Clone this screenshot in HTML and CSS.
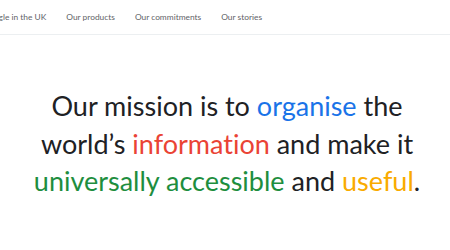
FILE: index.html
```html
<!DOCTYPE html>
<html lang="en">
<head>
    <meta charset="UTF-8">
    <meta name="viewport" content="width=device-width, initial-scale=1.0">
    <title>About Google</title>
    <link rel="stylesheet" href="styles.css">
</head>
<body>
    <!-- Top navigation -->
    <div class="nav">
        <ul class="nav-list">
            <li>Google in the UK</li>
            <li>Our products</li>
            <li>Our commitments</li>
            <li>Our stories</li>
        </ul>
    </div>

    <!-- Mission statement -->
    <div class="mission">
        <h1>Our mission is to <span class="blue">organise</span> the<br>world’s <span class="red">information</span> and make it<br><span class="green">universally accessible</span> and <span class="yellow">useful</span>.</h1>
    </div>
</body>
</html>
```

FILE: styles.css
```css
body {
    margin: 0;
    padding: 0;
    background-color: #fff;
    font-family: Lato, Roboto, sans-serif;
    color: #202124;
    overflow: hidden;
    font-variant-ligatures: none;
}
.nav {
    height: 34px;
    border-bottom: 1px solid #eceff1;
    display: flex;
    align-items: center;
}
.nav-list {
    display: flex;
    gap: 20px;
    list-style: none;
    margin: 0 0 0 -17px;
    padding: 0;
    font-size: 8.4px;
    color: #5f6368;
    white-space: nowrap;
}
.mission {
    padding: 52px 0 0 4px;
}
h1 {
    margin: 0;
    font-size: 27px;
    font-weight: 400;
    line-height: 37.5px;
    text-align: center;
    white-space: nowrap;
}
.blue {
    color: #1a73e8;
}
.red {
    color: #ea4335;
}
.green {
    color: #1e8e3e;
}
.yellow {
    color: #f9ab00;
}
```
